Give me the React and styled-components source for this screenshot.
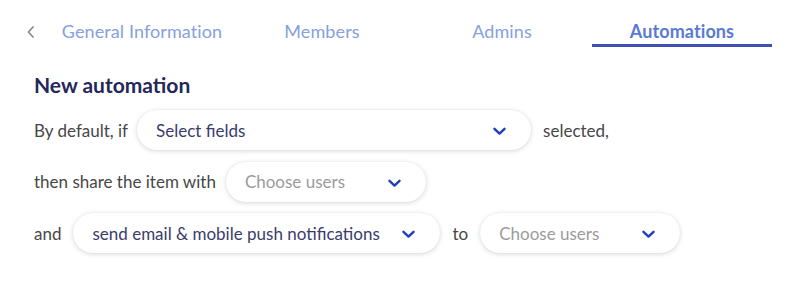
import React from "react";
import styled, { createGlobalStyle } from "styled-components";

const Global = createGlobalStyle`
  html, body { margin: 0; padding: 0; background: #ffffff; }
  body { font-family: "Lato", "Open Sans", sans-serif; }
  * { box-sizing: border-box; }
`;

const Page = styled.div`
  width: 792px;
  height: 303px;
  padding: 16px 20px 0 22px;
  background: #fff;
`;

const TabBar = styled.div`
  display: flex;
  align-items: flex-end;
  height: 31px;
`;

const BackButton = styled.button`
  width: 30px;
  height: 31px;
  border: 0;
  background: none;
  padding: 0 0 0 4px;
  display: flex;
  align-items: center;
  justify-content: flex-start;
  align-self: flex-start;
  cursor: pointer;
`;

const Tab = styled.div`
  width: 180px;
  text-align: center;
  font-size: 18px;
  line-height: 20px;
  padding-bottom: 3px;
  letter-spacing: 0.1px;
  color: ${(p) => (p.$active ? "#5a7ad4" : "#86a0e0")};
  font-weight: ${(p) => (p.$active ? 700 : 400)};
  border-bottom: 3px solid ${(p) => (p.$active ? "#3f51b5" : "transparent")};
`;

const Content = styled.div`
  padding-left: 12px;
`;

const Heading = styled.h2`
  margin: 26px 0 13px;
  font-size: 21px;
  line-height: 24px;
  font-weight: 700;
  color: #242759;
`;

const Rows = styled.div`
  display: flex;
  flex-direction: column;
  gap: 11.5px;
`;

const Row = styled.div`
  display: flex;
  align-items: center;
  gap: ${(p) => p.$gap || 10}px;
  height: 40px;
`;

const Label = styled.span`
  font-size: 17px;
  color: #474747;
  margin-left: ${(p) => p.$ml || 0}px;
`;

const Select = styled.div`
  flex: none;
  width: ${(p) => p.$w}px;
  height: 40px;
  border-radius: 20px;
  background: #fff;
  box-shadow: 0 1px 5px rgba(0, 0, 0, 0.16), 0 0 1px rgba(0, 0, 0, 0.08);
  display: flex;
  align-items: center;
  justify-content: space-between;
  padding: 0 25px 0 19px;
  font-size: 17px;
  color: ${(p) => (p.$placeholder ? "#9b9b9b" : "#3a3c6c")};
`;

const Chevron = () => (
  <svg width="13" height="9" viewBox="0 0 13 9" style={{ marginTop: 3 }}>
    <path d="M1.5 1.8 L6.5 6.6 L11.5 1.8" fill="none" stroke="#1d3fbf" strokeWidth="2.4" strokeLinecap="round" strokeLinejoin="round" />
  </svg>
);

const BackIcon = () => (
  <svg width="10" height="14" viewBox="0 0 10 14">
    <path d="M7 2 L2.5 7 L7 12" fill="none" stroke="#8c8c8c" strokeWidth="1.8" strokeLinecap="round" strokeLinejoin="round" />
  </svg>
);

export default function App() {
  return (
    <>
      <Global />
      <Page>
        <TabBar>
          <BackButton aria-label="Back">
            <BackIcon />
          </BackButton>
          <Tab>General Information</Tab>
          <Tab>Members</Tab>
          <Tab>Admins</Tab>
          <Tab $active>Automations</Tab>
        </TabBar>
        <Content>
          <Heading>New automation</Heading>
          <Rows>
            <Row $gap={9}>
              <Label>By default, if</Label>
              <Select $w={394}>
                Select fields
                <Chevron />
              </Select>
              <Label $ml={3}>selected,</Label>
            </Row>
            <Row>
              <Label>then share the item with</Label>
              <Select $w={200} $placeholder>
                Choose users
                <Chevron />
              </Select>
            </Row>
            <Row $gap={12}>
              <Label>and</Label>
              <Select $w={367}>
                send email &amp; mobile push notifications
                <Chevron />
              </Select>
              <Label>to</Label>
              <Select $w={200} $placeholder>
                Choose users
                <Chevron />
              </Select>
            </Row>
          </Rows>
        </Content>
      </Page>
    </>
  );
}
